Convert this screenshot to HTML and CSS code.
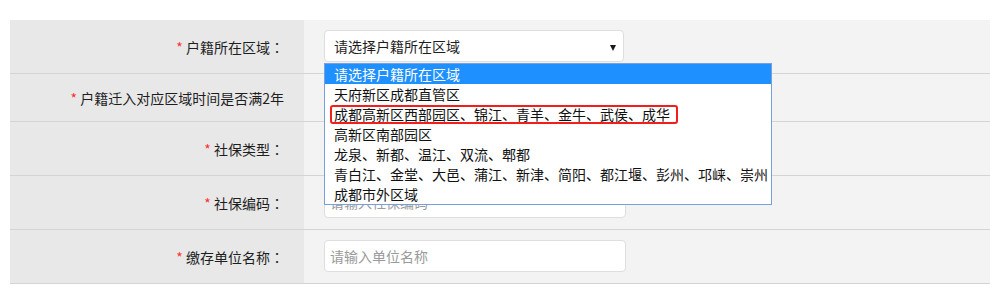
FILE: index.html
```html
<!DOCTYPE html>
<html lang="zh-CN">
<head>
<meta charset="utf-8">
<title>户籍信息</title>
<link rel="stylesheet" href="styles.css">
</head>
<body>
<div class="page">
  <div class="form">
    <div class="row">
      <div class="label"><span class="req">*</span> 户籍所在区域<span class="colon">：</span></div>
      <div class="value">
        <div class="select-wrap">
          <div class="select">请选择户籍所在区域<span class="arrow"></span></div>
          <ul class="dropdown">
            <li class="opt active">请选择户籍所在区域</li>
            <li class="opt">天府新区成都直管区</li>
            <li class="opt">成都高新区西部园区、锦江、青羊、金牛、武侯、成华</li>
            <li class="opt">高新区南部园区</li>
            <li class="opt">龙泉、新都、温江、双流、郫都</li>
            <li class="opt">青白江、金堂、大邑、蒲江、新津、简阳、都江堰、彭州、邛崃、崇州</li>
            <li class="opt">成都市外区域</li>
            <li class="mark"></li>
          </ul>
        </div>
      </div>
    </div>
    <div class="row short">
      <div class="label"><span class="req">*</span> 户籍迁入对应区域时间是否满2年</div>
      <div class="value"></div>
    </div>
    <div class="row">
      <div class="label"><span class="req">*</span> 社保类型<span class="colon">：</span></div>
      <div class="value"><div class="select blank"></div></div>
    </div>
    <div class="row">
      <div class="label"><span class="req">*</span> 社保编码<span class="colon">：</span></div>
      <div class="value"><div class="input">请输入社保编码</div></div>
    </div>
    <div class="row">
      <div class="label"><span class="req">*</span> 缴存单位名称<span class="colon">：</span></div>
      <div class="value"><div class="input">请输入单位名称</div></div>
    </div>
  </div>
</div>
</body>
</html>
```

FILE: styles.css
```css
html, body {
  margin: 0;
  padding: 0;
  background: #ffffff;
}

body {
  font-family: "Noto Sans CJK SC", "Microsoft YaHei", sans-serif;
  font-size: 14px;
  color: #333333;
}

.page {
  padding: 20px 6px 0 10px;
}

.form {
  width: 980px;
}

.row {
  display: flex;
  height: 53px;
  border-bottom: 1px solid #d4d4d4;
}

.row.short {
  height: 47px;
}

.label {
  width: 294px;
  flex: none;
  box-sizing: border-box;
  background: #e8e8e8;
  display: flex;
  align-items: center;
  justify-content: flex-end;
  padding-right: 20px;
  line-height: 20px;
  color: #1e1e1e;
  white-space: pre;
}

.colon {
  font-family: "Noto Sans CJK JP", "Noto Sans CJK SC", sans-serif;
}

.req {
  color: #ff3030;
}

.value {
  flex: 1;
  background: #f3f3f3;
  display: flex;
  align-items: flex-start;
  padding: 10px 0 0 20px;
}

.select-wrap {
  position: relative;
}

.select {
  position: relative;
  box-sizing: border-box;
  width: 300px;
  height: 32px;
  background: #ffffff;
  border: 1px solid #dedede;
  border-radius: 4px;
  padding-left: 9px;
  line-height: 30px;
  color: #1e1e1e;
}

.arrow {
  position: absolute;
  right: 7px;
  top: 14px;
  width: 0;
  height: 0;
  border-left: 3.5px solid transparent;
  border-right: 3.5px solid transparent;
  border-top: 6px solid #1a1a1a;
}

.input {
  box-sizing: border-box;
  width: 302px;
  height: 32px;
  background: #ffffff;
  border: 1px solid #dedede;
  border-radius: 4px;
  padding-left: 5px;
  line-height: 30px;
  color: #9a9a9a;
}

.dropdown {
  position: absolute;
  z-index: 10;
  left: 0;
  top: 33px;
  width: 448px;
  box-sizing: border-box;
  margin: 0;
  padding: 0;
  list-style: none;
  background: #ffffff;
  border: 1px solid #7a9fdc;
}

.opt {
  height: 20px;
  line-height: 20px;
  padding-left: 9px;
  color: #111111;
  white-space: nowrap;
  overflow: hidden;
}

.opt.active {
  background: #1e90ff;
  color: #ffffff;
}

.mark {
  position: absolute;
  left: 5px;
  top: 41px;
  width: 348px;
  height: 19px;
  box-sizing: border-box;
  border: 2.5px solid #f21d1d;
  border-radius: 3px;
}
```
